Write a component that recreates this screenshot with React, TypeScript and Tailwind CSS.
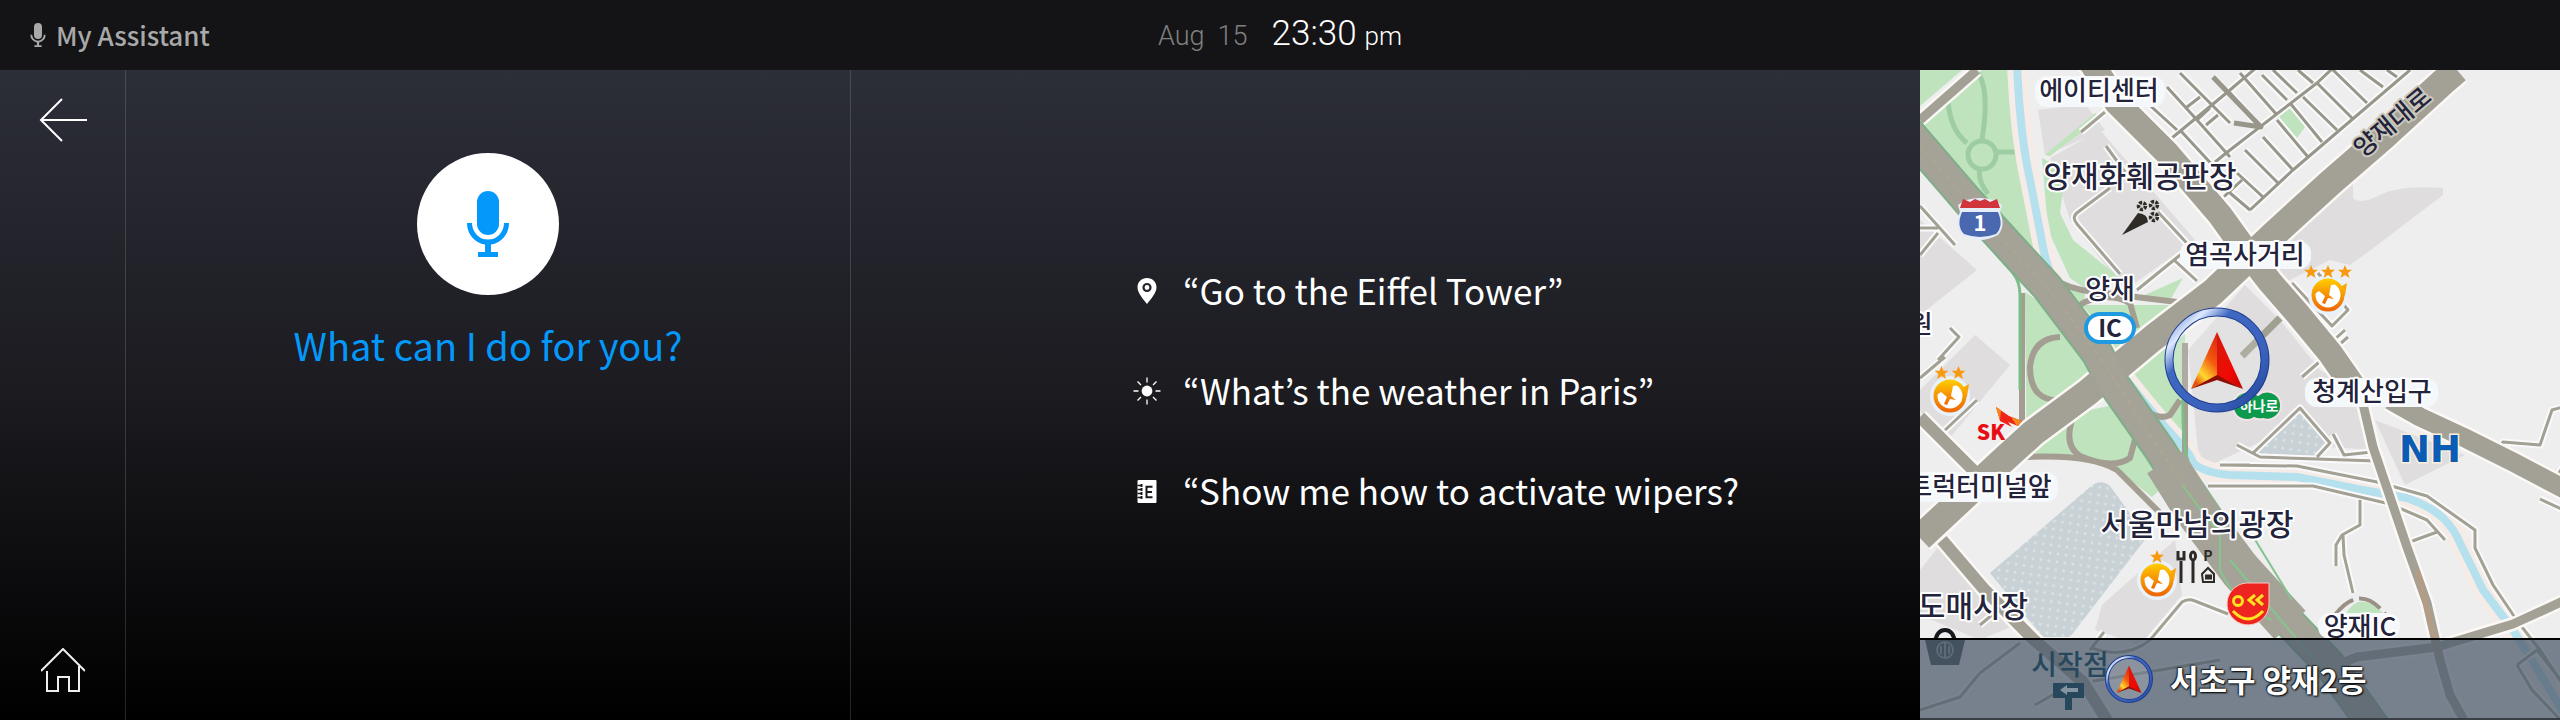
import React from "react";

const UI = "font-['Noto_Sans_CJK_KR','Noto_Sans',sans-serif]";

function MicIcon({ className }: { className?: string }) {
  return (
    <svg viewBox="0 0 42 66" className={className} fill="currentColor" aria-hidden="true">
      <rect x="10" y="0" width="22" height="44" rx="11" />
      <path d="M0 32h5a16 16.500 0 0 0 32 0h5a21 21.500 0 0 1-18 21.500V61h7v5H11v-5h7v-7.500A21 21.500 0 0 1 0 32z" />
    </svg>
  );
}

function BackIcon() {
  return (
    <svg viewBox="0 0 48 44" className="h-11 w-12" fill="none" stroke="white" strokeWidth="2" aria-hidden="true">
      <path d="M48 22H2M23 1 2 22l21 21" />
    </svg>
  );
}

function HomeIcon() {
  return (
    <svg viewBox="0 0 44 44" className="size-11" fill="none" stroke="#eee" strokeWidth="2" aria-hidden="true">
      <path d="M0 23 22 1l22 22M6 23v20h11V29h11v14h10V18" />
    </svg>
  );
}

function PinIcon() {
  return (
    <svg viewBox="0 0 28 28" className="size-7" aria-hidden="true">
      <path d="M14 1c5.500 0 9.500 4 9.500 9.300C23.500 16 18 22 14 27 10 22 4.500 16 4.500 10.300 4.500 5 8.500 1 14 1z" fill="white" />
      <circle cx="14" cy="10.500" r="3.500" fill="none" stroke="#22252d" strokeWidth="2.200" />
    </svg>
  );
}

function SunIcon() {
  return (
    <svg viewBox="0 0 28 28" className="size-7" stroke="white" strokeWidth="1.300" aria-hidden="true">
      <circle cx="14" cy="14" r="5.400" fill="white" stroke="none" />
      <path d="M14 .5v5M14 22.500v5M.5 14h5M22.500 14h5M4.500 4.500l3.500 3.500M20 20l3.500 3.500M4.500 23.500 8 20M20 8l3.500-3.500" />
    </svg>
  );
}

function ManualIcon() {
  return (
    <svg viewBox="0 0 28 28" className="size-7" aria-hidden="true">
      <rect x="4.500" y="3" width="19" height="23" rx="1" fill="white" />
      <path d="M4.500 8.500h4M4.500 12.500h4M4.500 16.500h4M4.500 20.500h4" stroke="#18191e" strokeWidth="1.300" />
      <path d="M8.500 7v3M8.500 11v3M8.500 15v3M8.500 19v3" stroke="#18191e" strokeWidth="2" />
      <path d="M19.500 9.800h-6v10.400h6M13.500 15h5.500" fill="none" stroke="#18191e" strokeWidth="2" />
    </svg>
  );
}

function Cursor({ r, ring, s }: { r: number; ring: number; s: number }) {
  return (
    <g>
      <circle r={r} fill="white" fillOpacity="0.15" stroke="#1d3d8c" strokeWidth={ring} />
      <circle r={r} fill="none" stroke="url(#ring)" strokeWidth={ring - 2} />
      <g transform={`scale(${s})`}>
        <path d="M0-28-26 29 0 16z" fill="url(#arrowLeft)" />
        <path d="M0-28 26 29 0 16z" fill="url(#arrowRight)" />
        <path d="M-26 29 0 15l26 14L0 20z" fill="#8d0f05" />
      </g>
    </g>
  );
}

function Defs() {
  return (
    <defs>
      <linearGradient id="ring" x1="0" y1="0" x2="1" y2="1">
        <stop offset="0" stopColor="#4a70c4" />
        <stop offset="0.180" stopColor="#dfe9ff" />
        <stop offset="0.320" stopColor="#3f68c2" />
        <stop offset="0.700" stopColor="#3a62bd" />
        <stop offset="1" stopColor="#23459a" />
      </linearGradient>
      <linearGradient id="arrowLeft" x1="0.900" y1="0" x2="0.400" y2="1">
        <stop offset="0" stopColor="#e02010" />
        <stop offset="0.450" stopColor="#f25a10" />
        <stop offset="0.780" stopColor="#ffd830" />
        <stop offset="1" stopColor="#e8500c" />
      </linearGradient>
      <linearGradient id="arrowRight" x1="0" y1="0" x2="1" y2="1">
        <stop offset="0" stopColor="#d01c0c" />
        <stop offset="0.600" stopColor="#f20a04" />
        <stop offset="1" stopColor="#c00500" />
      </linearGradient>
      <linearGradient id="coin" x1="0" y1="0" x2="0" y2="1">
        <stop offset="0" stopColor="#ffc800" />
        <stop offset="1" stopColor="#ee6a08" />
      </linearGradient>
      <pattern id="dots" width="8" height="8" patternUnits="userSpaceOnUse" patternTransform="rotate(8)">
        <rect width="8" height="8" fill="#c8d1d5" />
        <circle cx="4" cy="4" r="1.500" fill="#dbe3e6" />
      </pattern>
    </defs>
  );
}

type Line = { d: string; w: number };

const avenues: Line[] = [
  { d: "M0 468 30 440 80 393 113 363 167 323 233 268 293 222 353 165 410 113 463 67 523 12 537 0", w: 27 },
  { d: "M167-14 197 33 247 83 300 145 323 177 350 212 377 243 410 283 433 316", w: 25 },
  { d: "M470 330 500 347 543 367 593 392 650 422", w: 19 },
  { d: "M0 347 57 404M22 470 63 518 113 569 163 612 190 655", w: 12 },
  { d: "M443 334 453 377 470 427 487 477 507 533 520 590 530 625 545 652", w: 9 },
  { d: "M650 528 593 554 517 577 437 587 405 600", w: 9 },
  { d: "M57 0 0 50", w: 9 },
];

const highway =
  "M-20 52 47 130 90 177 127 217 177 283 193 313 240 380 270 427 300 467 323 507 370 553 410 595 460 665";

const blockLines = [
  "M310 80 397 13 413-2M310 80 295 92M330 140 373 100 490 0M247 72 310 20 337-3M267 37 280 27",
  "M343 67 373 100M325 80 358 113M317 103 343 127M310 123 330 140M357 50 388 87M370 33 402 72M383 27 417 60M397 13 432 48M413 0 447 33M440 0 463 17M467 0 477 7",
  "M310 23 340 57M320 3 357 45M342 5 367 30M353 0 377 23M378 0 393 13M260 60 297 100M277 50 310 87M247 17 277 50M213 20 257 60M260 3 310 53M295 135 322 110M277 50 290 38M286 55 298 45",
].join("");

const lanes = [
  "M161 62 185 42M186 76 205 102M190 118 158 142Q151 147 157 154L200 204M217 220 254 190 277 211M238 142 275 182M254 190 270 177",
  "M382 307 428 267M395 287 425 260M370 223 380 237M372 213 412 256 428 240 398 203M393 230 407 213",
  "M0 136 35 175M0 158H18M0 185 18 163M30 258 39 267 18 290M0 308 25 287M23 362 57 330M60 555 72 545",
  "M317 375 340 387 457 391M333 383 380 338 410 373 397 387M413 364 424 385 452 382M577 380 583 372 620 375 632 340 650 335M577 380 560 376M636 408 650 385",
  "M288 416 393 416 470 434 507 450 525 470M487 473 517 462M300 395 377 396 457 412 507 426 555 460 555 478 573 515 598 552 620 580 650 625",
  "M440 430V455L422 465 416 475V496M423 465 424 485 433 523",
  "M170 580 184 562M172 578Q205 590 230 570L262 532Q268 528 275 531L308 544M300 395H330M303 416H330M620 429 650 443",
  "M0 640 40 627 60 603 100 573M115 635 150 615 300 590M597 595 617 580 650 622M597 595 612 620 650 660",
].join("");

const star = "M0-7 2-2.200 7-2.200 3 1 4.500 6 0 3-4.500 6-3 1-7-2.200-2-2.200z";

function Rated({ x, y, stars }: { x: number; y: number; stars: number }) {
  return (
    <g transform={`translate(${x} ${y})`}>
      <circle r="20" fill="#e9f1fb" />
      <path d="M9-6 19-12 17 1z" fill="#f9a60a" />
      <circle r="14.500" fill="white" stroke="url(#coin)" strokeWidth="4" />
      <path d="M-15 0A15 15 0 0 1 10-11L3-10 1 0 6 4 0 3-3 9-6 8-3 1-9-4z" fill="url(#coin)" />
      {Array.from({ length: stars }, (_, i) => (
        <path key={i} d={star} transform={`translate(${(i - (stars - 1) / 2) * 17} -23)`} fill="#f79a10" />
      ))}
    </g>
  );
}

type Label = { t: string; x: number; y: number; size: number; pill?: [number, number, number, number]; rotate?: number };

const labels: Label[] = [
  { t: "에이티센터", x: 179, y: 30, size: 26, pill: [115, 6, 130, 31] },
  { t: "양재화훼공판장", x: 220, y: 117, size: 30 },
  { t: "염곡사거리", x: 325, y: 194, size: 26, pill: [260, 171, 131, 28] },
  { t: "양재", x: 190, y: 229, size: 27 },
  { t: "양재대로", x: 478, y: 59, size: 25, rotate: -40 },
  { t: "청계산입구", x: 452, y: 331, size: 26, pill: [385, 308, 133, 29] },
  { t: "트럭터미널앞", x: 60, y: 426, size: 26, pill: [-10, 402, 148, 30] },
  { t: "서울만남의광장", x: 277, y: 465, size: 30 },
  { t: "도매시장", x: 53, y: 547, size: 30 },
  { t: "양재IC", x: 440, y: 566, size: 26, pill: [398, 543, 82, 26] },
  { t: "원", x: 1, y: 263, size: 25 },
];

function MapDrawing() {
  return (
    <svg viewBox="0 0 640 650" preserveAspectRatio="xMidYMid slice" className="absolute inset-0 size-full" role="img" aria-label="Map">
      <Defs />
      <rect width="640" height="650" fill="#eeeeee" />

      <g fill="#dfdddd">
        <path d="M118 40 165 34 185 60 125 85zM130 88 180 60 275 170 205 220 150 150z" />
        <path d="M0 150 57 200 0 245zM55 265 90 295 20 380 0 340 0 320zM20 475 95 555 60 570 0 545V500z" />
        <path d="M398 145 433 110 433 128Q440 135 460 125T523 118V125L448 182 430 195 410 190 360 215 345 190z" />
        <path d="M268 280 325 215 360 250 400 300 435 320 452 380 340 372 280 400zM455 350 545 385 485 415z" />
        <path d="M182 535 255 470 262 525 220 575 175 560z" />
      </g>
      <g fill="#bfe3bd">
        <path d="M0 0H42L0 36zM0 52 62 0H90L97 80 118 197 57 123z" />
        <path d="M125 85 175 43 180 48 130 86zM122 88 135 95 143 120 140 143 153 170 200 208 170 222 150 208 128 160z" />
        <path d="M105 222 155 255 185 300 147 326 170 340 215 330 220 380 247 413 232 427 195 398 140 387H107z" />
        <path d="M105 222 187 300 107 372z" />
        <path d="M127 210 165 222 160 280zM155 235H255L187 300zM215 290 265 262V393L205 310z" />
        <path d="M218 228 263 208 250 230zM356 43 370 34 385 57 377 68z" />
        <path d="M425 545Q440 518 465 545z" />
      </g>
      <g fill="none" stroke="#9fcda3" strokeWidth="5">
        <circle cx="62" cy="85" r="14" />
        <path d="M28 30Q30 60 47 73M58 3Q70 20 62 70M77 82H97M60 98Q57 110 68 124M92 0 97 80 118 190" />
      </g>
      <path d="M70 503 170 417Q180 408 190 416L227 467 150 567H123z" fill="url(#dots)" />
      <path d="M380 340 410 373 397 387 333 383z" fill="url(#dots)" />

      <g fill="none" strokeLinejoin="round">
        {["#f5ebe7", "#b5e0ee"].map((c, i) => (
          <path
            key={c}
            d="M97-5Q100 60 108 100T123 177 153 240 187 283 220 327 257 370 273 393Q285 403 310 405 345 406 377 407L443 420 487 428Q510 436 523 448 535 460 540 473L563 520 593 560 610 587 645 645"
            stroke={c}
            strokeWidth={i === 0 ? 20 : 8}
          />
        ))}
        <path d={blockLines + lanes} stroke="#fafafa" strokeWidth="7" />
        <path d={blockLines} stroke="#98968a" strokeWidth="3" />
        <path d={lanes} stroke="#a3a094" strokeWidth="3" />
        <path d="M314 53 341 57 293 7M375 240 342 200" stroke="#98968a" strokeWidth="5" />
        <path d="M360 248 322 286" stroke="#a09f90" strokeWidth="7" />
        <path
          d="M102 223V370M140 267Q113 268 110 297 110 333 143 330M153 347Q143 375 160 386 193 400 210 388L217 362M107 387Q170 384 197 400L240 443M177 262Q147 240 165 232 190 222 210 233L217 258M130 207Q150 220 175 222L257 232M265 273V393M220 333Q235 352 250 345L260 330"
          stroke="#a39d92"
          strokeWidth="6"
        />
        <path d="M-3 95 93 203Q100 212 100 225V320M263 330Q262 390 273 400L300 440 370 540 420 590" stroke="#7cbd88" strokeWidth="3" />
        <g strokeLinecap="butt">
          {avenues.map((r) => (
            <path key={r.d} d={r.d} stroke="#fbf8f6" strokeWidth={r.w + 5} />
          ))}
          <path d={highway} stroke="#7fae8a" strokeWidth="33" />
          {avenues.map((r) => (
            <path key={r.d} d={r.d} stroke="#a3a196" strokeWidth={r.w} />
          ))}
          <path d={highway} stroke="#a5a297" strokeWidth="29" />
          <path d="M245 392 275 440 320 500 370 555" stroke="#a5a297" strokeWidth="42" />
          <path d="M310 490 365 555 395 590M334 468 372 530M262 415 300 465 300 500Q320 540 352 550" stroke="#86c48f" strokeWidth="2" />
          <path d="M-20 52 47 130 90 177 127 217 177 283 240 380 300 467" stroke="#b9ad85" strokeWidth="1" strokeDasharray="5 5" />
          <path d="M497 500 520 590" stroke="#b59c84" strokeWidth="5" />
          <path d="M415 545Q440 512 466 545" stroke="#9a9086" strokeWidth="4" strokeDasharray="24 6" />
        </g>
      </g>

      <g transform="translate(60 148)">
        <path d="M-22-13Q-14-20 0-20T22-13L20-6Q26 8 18 17 8 22 0 22T-18 17Q-26 8-20-6z" fill="#e6edf8" />
        <path d="M-20-10-17-19-10-16-5-19 0-17 5-19 10-16 17-19 20-10z" fill="#d2343c" />
        <path d="M-18-6H18Q24 8 16 16 8 19 0 19T-16 16Q-24 8-18-6z" fill="#4a68b0" />
        <text y="13" textAnchor="middle" fill="white" fontSize="22" fontWeight="700" className={UI}>1</text>
      </g>

      <g transform="translate(222 148)" fill="#2f2c28">
        <path d="M-20 17-4-5Q6-4 6 4z" />
        {[[0, -12], [12, -13], [12, -1]].map(([x, y]) => (
          <circle key={`${x},${y}`} cx={x} cy={y} r="3.500" fill="#cfccc8" stroke="#2f2c28" strokeWidth="3.500" strokeDasharray="3 1.400" />
        ))}
      </g>

      <g className="font-['Noto_Sans_CJK_KR',sans-serif]" textAnchor="middle" fill="#23233c" fontWeight="500">
        {labels.map((l) => (
          <g key={l.t} transform={l.rotate ? `rotate(${l.rotate} ${l.x} ${l.y})` : undefined}>
            {l.pill && <rect x={l.pill[0]} y={l.pill[1]} width={l.pill[2]} height={l.pill[3]} rx="12" fill="#f4f8fb" />}
            <text x={l.x} y={l.y} fontSize={l.size} stroke={l.rotate ? "#c9c7bb" : "#ffffff"} strokeWidth="4" strokeLinejoin="round" paintOrder="stroke">
              {l.t}
            </text>
          </g>
        ))}
        <rect x="166" y="244" width="48" height="28" rx="14" fill="white" stroke="#1f9ae0" strokeWidth="4" />
        <text x="190" y="267" fontSize="24" fontWeight="700">IC</text>
        <text x="510" y="392" fontSize="37" fontWeight="700" fill="#0b5cb4" stroke="#fbeedd" strokeWidth="3" paintOrder="stroke" className="font-['DejaVu_Sans',sans-serif]">
          NH
        </text>
        <text x="71" y="370" fontSize="21" fontWeight="900" fill="#e80c14">SK</text>
      </g>
      <path d="M76 337 89 346 102 351 98 356 88 352 92 357 80 351z" fill="#ee2418" />
      <path d="M91 347 102 351 97 356zM76 337 81 340 80 350z" fill="#f68a1c" />

      <Rated x={408} y={225} stars={3} />
      <Rated x={30} y={326} stars={2} />
      <Rated x={237} y={510} stars={1} />

      <g fill="none" stroke="#2d2a28" strokeWidth="3">
        <path d="M261 491V513M273 491V513M258 481V489H264V481" />
        <ellipse cx="273" cy="486" rx="2.500" ry="4" />
        <path d="M282 504 288 498 294 504V512H283z" strokeWidth="2" />
        <path d="M285 507H292" strokeWidth="5" />
      </g>
      <text x="288" y="491" textAnchor="middle" fontSize="14" fontWeight="700" fill="#2d2a28" className={UI}>P</text>

      <g transform="translate(328 533)">
        <path d="M-2-20H21V0A21 21 0 1 1-2-20z" fill="#ee2420" stroke="#f7c7c0" strokeWidth="1" />
        <g fill="none" stroke="#ffe51f" strokeWidth="3">
          <circle cx="-10" cy="-2" r="4.500" />
          <path d="M7-8 1-3 7 2M15-8 9-3 15 2M-15 8Q0 24 15 8" />
        </g>
      </g>

      <g transform="translate(338 335)">
        <path d="M-11-13A13 13 0 0 1 0-10 14 14 0 1 1 5 14Q0 15-4 13A14 14 0 1 1-11-13z" fill="#0d9a4d" stroke="#f3e3e8" strokeWidth="2" />
        <text x="1" y="6" textAnchor="middle" fontSize="14" fontWeight="700" fill="white" className={UI}>하나로</text>
      </g>

      <g transform="translate(297 290)">
        <Cursor r={48} ring={9} s={1} />
      </g>

      <g transform="translate(25 580)">
        <path d="M-10-8Q-8-20 0-20T10-8" fill="none" stroke="#15181c" strokeWidth="4" />
        <path d="M-20-10H20L14 15H-14z" fill="#2a3036" />
        <circle r="8" fill="none" stroke="#8a949d" strokeWidth="2" />
        <path d="M0-7V7M-4-4V4M4-4V4" stroke="#8a949d" strokeWidth="2" />
      </g>
    </svg>
  );
}

function MapPanel() {
  return (
    <section aria-label="Navigation" className="relative overflow-hidden">
      <MapDrawing />
      <div className="absolute inset-x-0 bottom-0 flex h-[82px] items-center border-y-2 border-t-black border-b-[#3a3f45] bg-[#4d5c6c]/75 pl-[112px]">
        <svg viewBox="0 0 76 66" className="h-[66px] w-[76px] shrink-0" aria-hidden="true">
          <text x="38" y="29" textAnchor="middle" fontSize="28" fontWeight="500" fill="#27485c" className={UI}>시작점</text>
          <path d="M21 37H52V52H40V64H33V52H21z" fill="#27485c" />
          <path d="M28 44 35 39V42H46V46H35V49z" fill="#8494a0" />
        </svg>
        <svg viewBox="-25 -25 50 50" className="-ml-1 size-[50px] shrink-0" aria-hidden="true">
          <Cursor r={22} ring={4} s={0.48} />
        </svg>
        <p className="ml-4 text-[31px] leading-10 font-bold text-white [text-shadow:0_0_2px_#000,1px_1px_2px_#000,-1px_-1px_1px_#333]">
          서초구 양재2동
        </p>
      </div>
    </section>
  );
}

const suggestions = [
  { icon: <PinIcon />, text: "“Go to the Eiffel Tower”" },
  { icon: <SunIcon />, text: "“What’s the weather in Paris”" },
  { icon: <ManualIcon />, text: "“Show me how to activate wipers?" },
];

export default function App() {
  return (
    <div className={`flex min-h-screen flex-col bg-black text-white ${UI}`}>
      <header className="grid h-[70px] shrink-0 grid-cols-[1fr_auto_1fr] items-center bg-[#141416]">
        <div className="flex items-center gap-[10px] pl-[30px] text-[#a9a9a9]">
          <MicIcon className="h-6 w-4" />
          <h1 className="text-[26px] leading-10 font-medium">My Assistant</h1>
        </div>
        <div className="flex items-baseline font-['Roboto',sans-serif] font-light">
          <span className="text-[27px] whitespace-pre text-[#808080]">Aug  15</span>
          <span className="ml-6 text-[35px] leading-10">23:30</span>
          <span className="ml-2 text-[26px]">pm</span>
        </div>
      </header>

      <main className="grid flex-1 grid-cols-[126px_725fr_1069fr_25%] bg-linear-to-b/srgb from-[#2c2e38] via-[#1b1b20] to-black">
        <nav className="flex flex-col items-center justify-between border-r border-white/15 pt-7 pb-7">
          <button type="button" aria-label="Back" className="cursor-pointer">
            <BackIcon />
          </button>
          <button type="button" aria-label="Home" className="cursor-pointer">
            <HomeIcon />
          </button>
        </nav>

        <section className="flex flex-col items-center border-r border-white/15 pt-[83px]">
          <button
            type="button"
            aria-label="Speak"
            className="flex size-[142px] cursor-pointer items-center justify-center rounded-full bg-white text-[#0498fb]"
          >
            <MicIcon className="h-[66px] w-[42px]" />
          </button>
          <p className="mt-5 text-[38px] leading-[60px] text-[#0498fb]">What can I do for you?</p>
        </section>

        <section className="flex flex-col justify-center pb-2 pl-[282px]">
          <ul>
            {suggestions.map((s) => (
              <li key={s.text} className="flex h-[100px] items-center gap-[22px]">
                {s.icon}
                <span className="pb-[3px] text-[35px] leading-[52px] whitespace-nowrap">{s.text}</span>
              </li>
            ))}
          </ul>
        </section>

        <MapPanel />
      </main>
    </div>
  );
}
